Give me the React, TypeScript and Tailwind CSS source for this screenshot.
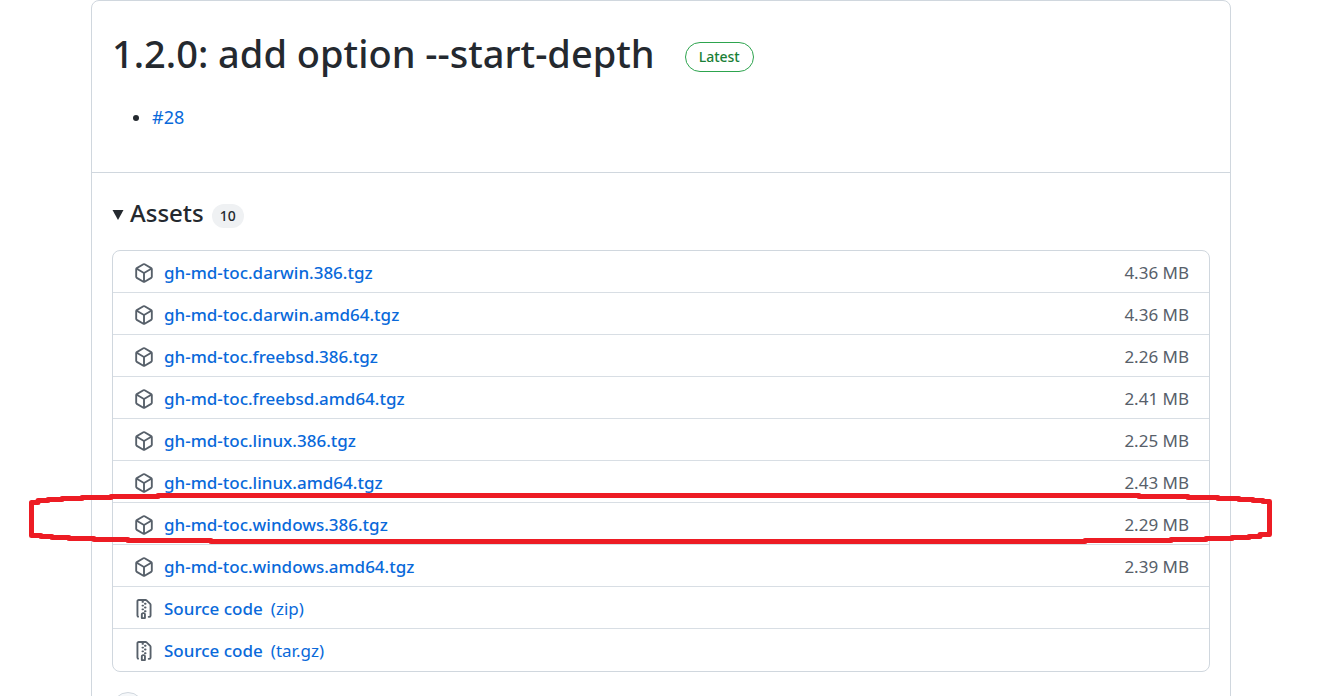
import React from "react";

type Asset = { name: string; suffix?: string; size?: string; kind: "package" | "zip" };

const assets: Asset[] = [
  { name: "gh-md-toc.darwin.386.tgz", size: "4.36 MB", kind: "package" },
  { name: "gh-md-toc.darwin.amd64.tgz", size: "4.36 MB", kind: "package" },
  { name: "gh-md-toc.freebsd.386.tgz", size: "2.26 MB", kind: "package" },
  { name: "gh-md-toc.freebsd.amd64.tgz", size: "2.41 MB", kind: "package" },
  { name: "gh-md-toc.linux.386.tgz", size: "2.25 MB", kind: "package" },
  { name: "gh-md-toc.linux.amd64.tgz", size: "2.43 MB", kind: "package" },
  { name: "gh-md-toc.windows.386.tgz", size: "2.29 MB", kind: "package" },
  { name: "gh-md-toc.windows.amd64.tgz", size: "2.39 MB", kind: "package" },
  { name: "Source code", suffix: "(zip)", kind: "zip" },
  { name: "Source code", suffix: "(tar.gz)", kind: "zip" },
];

const iconPaths = {
  package:
    "m8.878.392 5.25 3.045c.54.314.872.89.872 1.514v6.098a1.75 1.75 0 0 1-.872 1.514l-5.25 3.045a1.75 1.75 0 0 1-1.756 0l-5.25-3.045A1.75 1.75 0 0 1 1 11.049V4.951c0-.624.332-1.201.872-1.514L7.122.392a1.75 1.75 0 0 1 1.756 0ZM7.875 1.69l-4.63 2.685L8 7.133l4.755-2.758-4.63-2.685a.248.248 0 0 0-.25 0ZM2.5 5.677v5.372c0 .09.047.171.125.216l4.625 2.683V8.432Zm6.25 8.271 4.625-2.683a.25.25 0 0 0 .125-.216V5.677L8.75 8.432Z",
  zip:
    "M3.5 1.75v11.5c0 .09.048.173.126.217a.75.75 0 0 1-.752 1.298A1.748 1.748 0 0 1 2 13.25V1.75C2 .784 2.784 0 3.75 0h5.586c.464 0 .909.185 1.237.513l2.914 2.914c.329.328.513.773.513 1.237v8.586A1.75 1.75 0 0 1 12.25 15h-.5a.75.75 0 0 1 0-1.5h.5a.25.25 0 0 0 .25-.25V4.664a.25.25 0 0 0-.073-.177L9.513 1.573a.25.25 0 0 0-.177-.073H7.25a.75.75 0 0 1 0 1.5h-.5a.75.75 0 0 1 0-1.5h-3a.25.25 0 0 0-.25.25Zm3.75 8.75h.5c.966 0 1.75.784 1.75 1.75v3a.75.75 0 0 1-.75.75h-2.5a.75.75 0 0 1-.75-.75v-3c0-.966.784-1.75 1.75-1.75ZM6 5.25a.75.75 0 0 1 .75-.75h.5a.75.75 0 0 1 0 1.5h-.5A.75.75 0 0 1 6 5.25Zm.75 2.25h.5a.75.75 0 0 1 0 1.5h-.5a.75.75 0 0 1 0-1.5Zm1.25-.75A.75.75 0 0 1 8.75 6h.5a.75.75 0 0 1 0 1.5h-.5A.75.75 0 0 1 8 6.75ZM8.75 3h.5a.75.75 0 0 1 0 1.5h-.5a.75.75 0 0 1 0-1.5ZM8 9.75A.75.75 0 0 1 8.75 9h.5a.75.75 0 0 1 0 1.5h-.5A.75.75 0 0 1 8 9.75Zm-1 2.5v2.25h1v-2.25a.25.25 0 0 0-.25-.25h-.5a.25.25 0 0 0-.25.25Z",
};

function AssetRow({ asset }: { asset: Asset }) {
  return (
    <li className="flex h-[42px] items-center gap-2.5 border-b border-[#d8dee4] px-5 pt-0.5 last:border-b-0">
      <svg viewBox="0 0 16 16" className="ml-px size-5 shrink-0 fill-[#57606a]" aria-hidden="true">
        <path d={iconPaths[asset.kind]} />
      </svg>
      <a href="#download" className="flex gap-2 text-[#0969da]">
        <span className="font-medium">{asset.name}</span>
        {asset.suffix && <span>{asset.suffix}</span>}
      </a>
      {asset.size && <span className="ml-auto text-[#57606a]">{asset.size}</span>}
    </li>
  );
}

/* Hand-drawn red marker loop around the Windows 386 build. */
function Marker() {
  return (
    <svg
      width="1324"
      height="696"
      viewBox="0 0 1324 696"
      className="pointer-events-none absolute top-0 left-0"
      aria-hidden="true"
    >
      <path
        d="M31.5 502.5H38V500.5H48V499.5H62V498.5H82V497.5H111V496.5H158V495.5H1139V496.5H1188V497.5H1218V498.5H1239V499.5H1253V500.5H1263V501.5H1269.5V534.5H1260V536.5H1249V537.5H1232V538.5H1206V539.5H1171V540.5H1085V541.5H211V540.5H128V539.5H94V538.5H69V537.5H52V536.5H41V535.5H31.5Z"
        fill="none"
        stroke="#ed1c24"
        strokeWidth="5"
        strokeLinejoin="round"
      />
    </svg>
  );
}

export default function App() {
  return (
    <main className="relative h-screen overflow-hidden bg-white pr-[93px] pl-[91px] font-['Noto_Sans','Open_Sans',sans-serif] text-[#24292f]">
      <article className="rounded-lg border border-[#d0d7de]">
        <header className="border-b border-[#d0d7de] px-5 pt-[22px] pb-10">
          <div className="flex items-center gap-[30px]">
            <h1 className="text-[38px] leading-[60px] font-medium">1.2.0: add option --start-depth</h1>
            <span className="mt-2 rounded-full border border-[#2da44e] px-[13px] text-sm leading-7 font-medium text-[#1a7f37]">
              Latest
            </span>
          </div>
          <ul className="mt-5 list-disc pl-10 text-lg leading-[29px]">
            <li>
              <a href="#issue-28" className="text-[#0969da]">#28</a>
            </li>
          </ul>
        </header>
        <details open className="px-5 pt-6 pb-5">
          <summary className="flex items-center text-2xl leading-8">
            <svg viewBox="0 0 12 10" className="mt-1 mr-1.5 h-2.5 w-3 fill-[#24292f]" aria-hidden="true">
              <path d="M0.5 0h11L6 10z" />
            </svg>
            <h2 className="font-medium">Assets</h2>
            <span className="mt-1.5 ml-2 rounded-full bg-[#eff1f3] px-2 text-sm leading-6 font-medium">10</span>
          </summary>
          <ul className="mt-[21px] rounded-lg border border-[#d0d7de] text-[17px] leading-6">
            {assets.map((asset) => (
              <AssetRow key={asset.name + (asset.suffix ?? "")} asset={asset} />
            ))}
          </ul>
        </details>
        <footer className="px-5 pb-5">
          <div className="size-8 rounded-full border border-[#d0d7de] bg-[#f6f8fa]" />
        </footer>
      </article>
      <Marker />
    </main>
  );
}
